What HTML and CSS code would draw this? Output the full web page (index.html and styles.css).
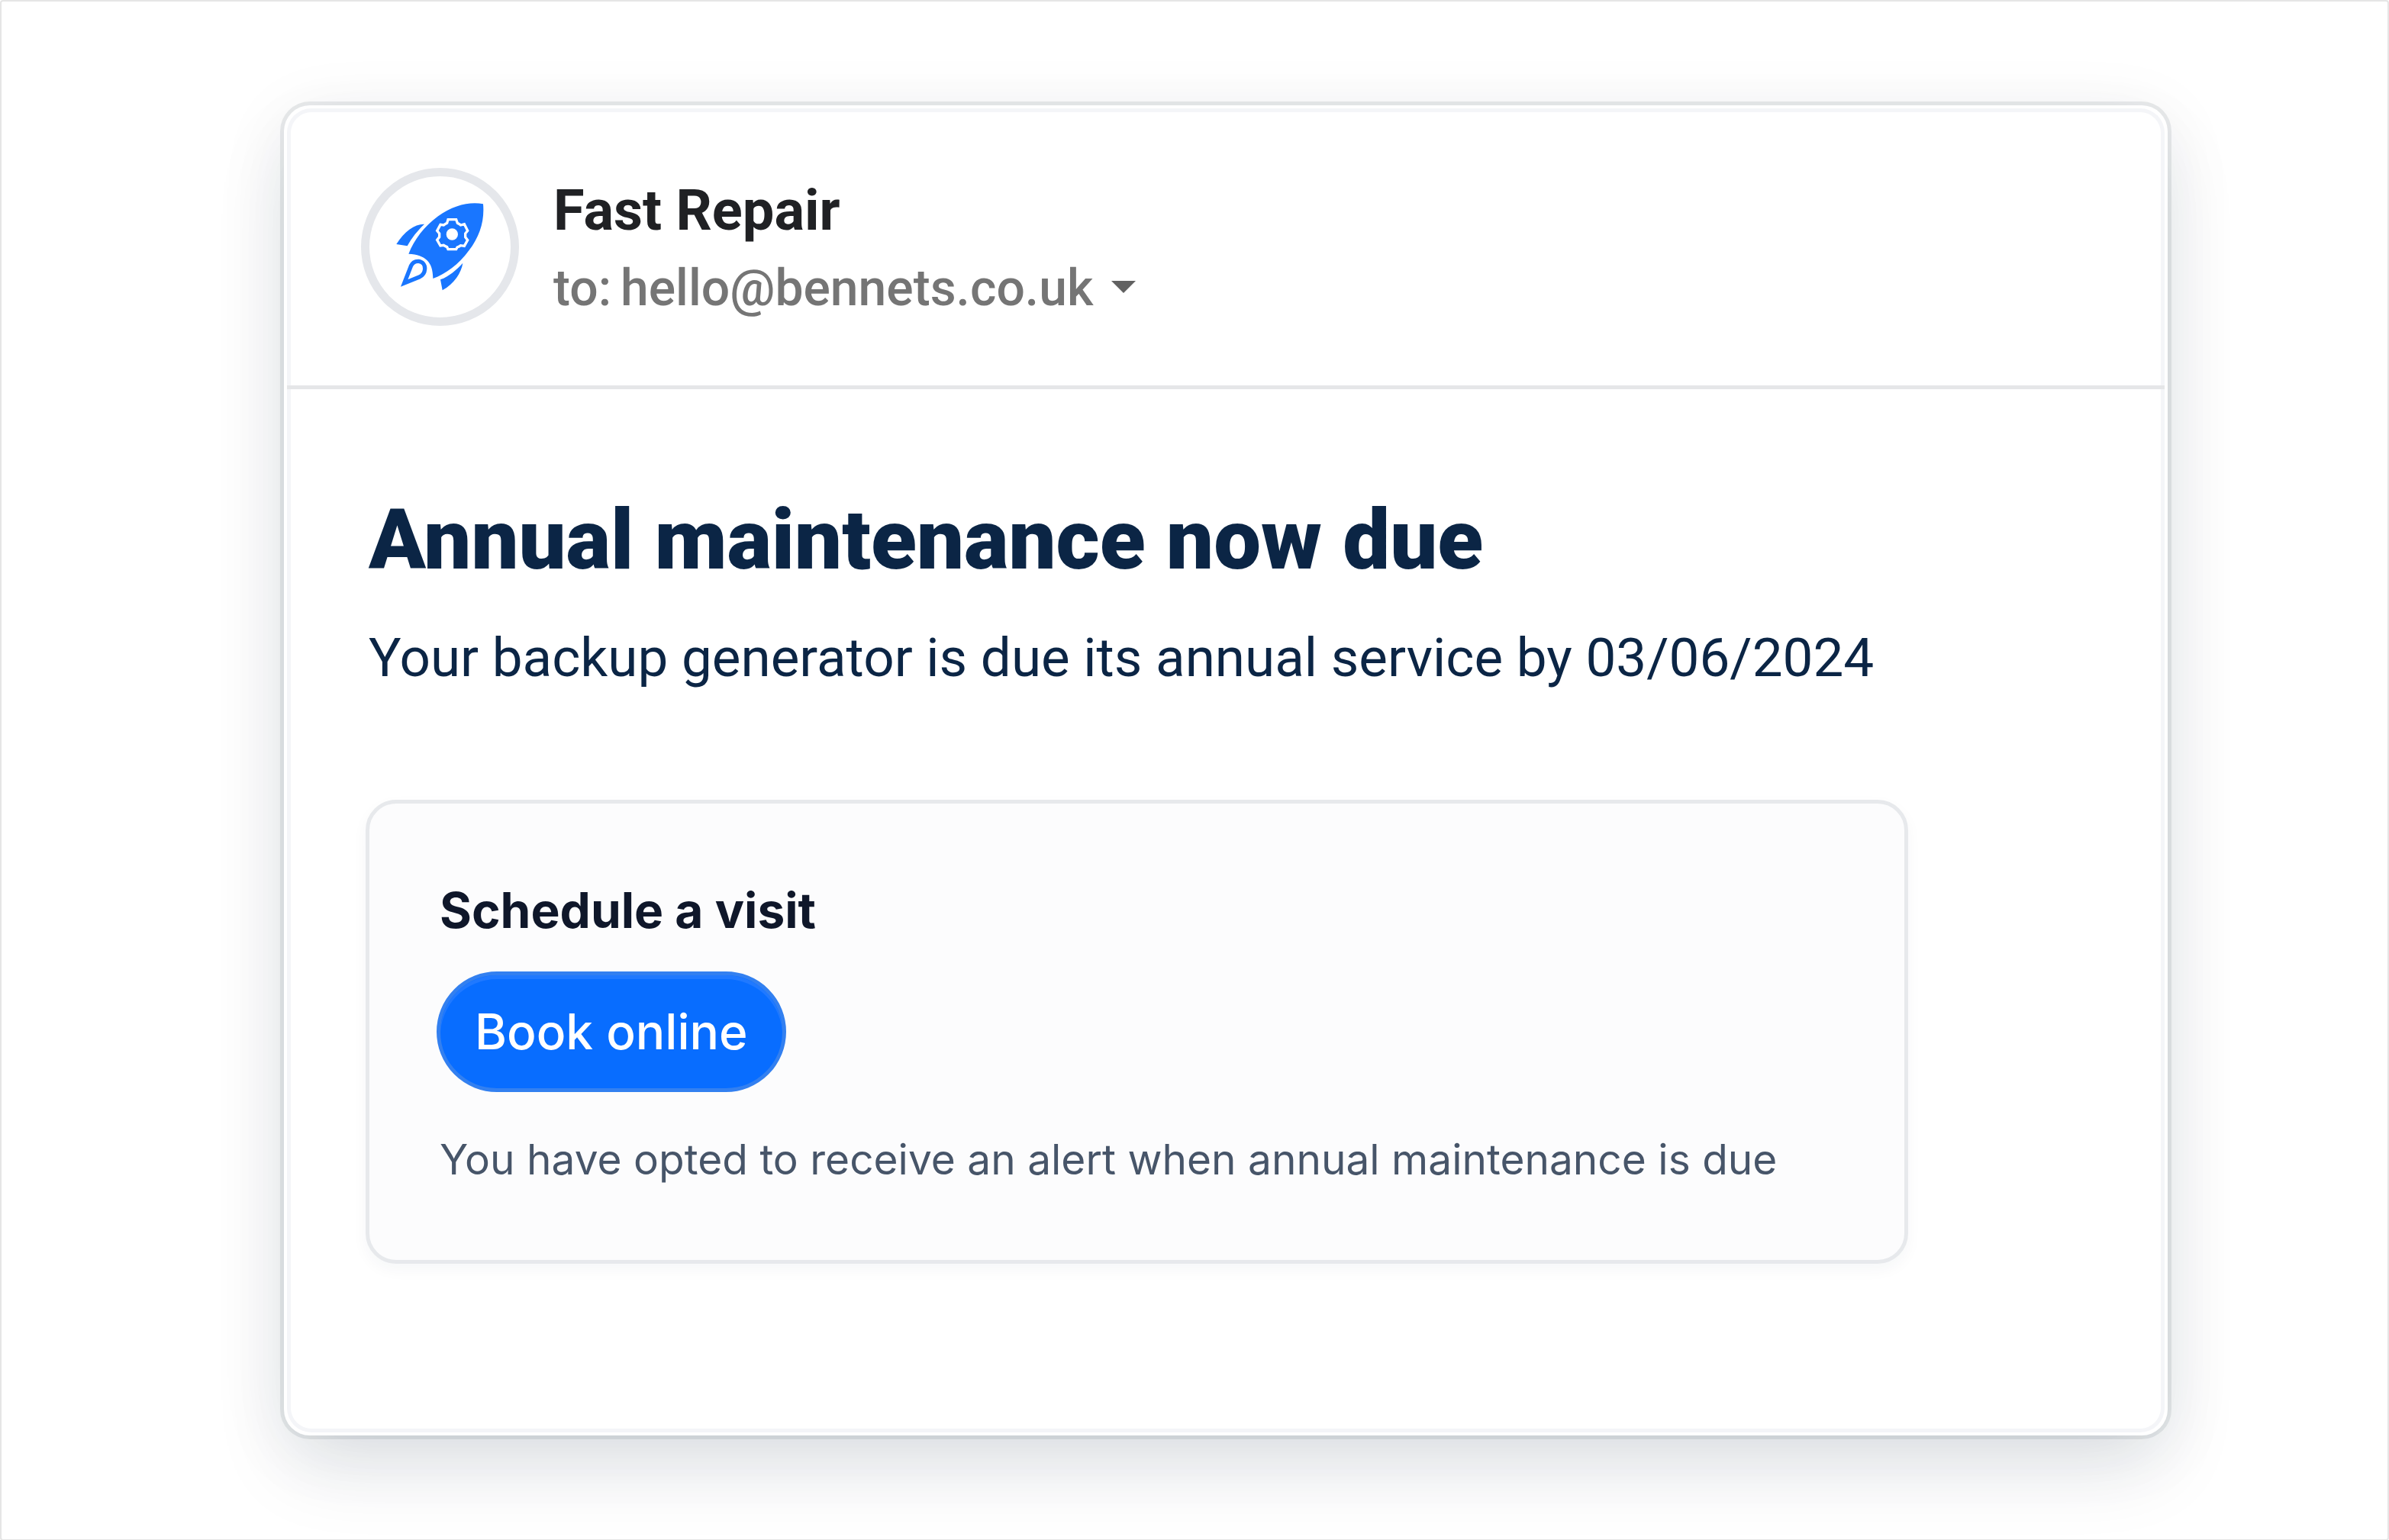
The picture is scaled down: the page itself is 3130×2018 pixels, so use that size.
FILE: index.html
```html
<!DOCTYPE html>
<html lang="en">
<head>
<meta charset="utf-8">
<meta name="viewport" content="width=device-width, initial-scale=1">
<title>Annual maintenance now due</title>
<link rel="stylesheet" href="styles.css">
</head>
<body>
<main class="stage">
  <article class="mail">
    <div class="mail-inner">
      <header class="mail-header">
        <div class="avatar">
          <svg class="rocket" viewBox="0 0 345 345" role="img" aria-label="Fast Repair logo">
            <g fill="#1976ff">
              <path d="M342 4C290-6 225 8 165 52C110 92 72 143 49 200C83 201 106 210 122 226C137 241 144 262 145 297C195 279 245 243 286 187C329 131 348 70 342 4Z"/>
              <path d="M111 83C73 82 32 112 1 162L44 169C62 136 83 110 111 83Z"/>
              <path d="M262 236C256 275 228 317 182 343L174 301C209 288 236 264 262 236Z"/>
            </g>
            <path d="M32 315L58 248C64 234 75 228 89 229C104 231 114 243 113 259C112 275 105 285 91 291Z" fill="none" stroke="#1976ff" stroke-width="16"/>
            <path d="M204 65H236L241 79C246 81 250 83 254 87L268 83L281 109L272 120V134L281 146L268 169L254 167C250 170 246 172 240 174L236 182H204L200 173C195 171 191 169 187 166L174 168L161 145L170 134V120L161 109L174 85L187 87C192 83 196 81 200 79Z" fill="none" stroke="#fff" stroke-width="10"/>
            <circle cx="220" cy="123" r="23" fill="#fff"/>
          </svg>
        </div>
        <div class="sender">
          <h2 class="sender-name">Fast Repair</h2>
          <div class="recipient">
            <span class="to">to:</span>
            <a class="address" href="mailto:hello@bennets.co.uk">hello@bennets.co.uk</a>
            <button class="details" type="button" aria-label="Show details">
              <svg class="caret" viewBox="0 0 32 16" aria-hidden="true"><path d="M0 0H32L16 16Z" fill="#616161"/></svg>
            </button>
          </div>
        </div>
      </header>
      <div class="mail-body">
        <div class="intro">
          <h1 class="title">Annual maintenance now due</h1>
          <p class="lead">Your backup generator is due its annual service by 03/06/2024</p>
        </div>
        <section class="visit">
          <h3 class="visit-title">Schedule a visit</h3>
          <button class="book" type="button">Book online</button>
          <p class="note">You have opted to receive an alert when annual maintenance is due</p>
        </section>
      </div>
    </div>
  </article>
</main>
</body>
</html>
```
FILE: styles.css
```css
* {
  box-sizing: border-box;
}

body {
  margin: 0;
  background: #fff;
  font-family: Roboto, "Liberation Sans", sans-serif;
}

h1, h2, h3, p {
  margin: 0;
}

.stage {
  min-height: 100vh;
  padding: 136px 288px 136px 370px;
  border: 2px solid #e5e5e5;
  border-radius: 4px;
  overflow: hidden;
}

.mail {
  padding: 4px;
  border-radius: 34px;
  background: #fff;
  box-shadow:
    0 0 0 5px rgba(20, 40, 60, 0.09),
    0 48px 104px -8px rgba(20, 40, 60, 0.11),
    0 16px 96px rgba(20, 40, 60, 0.07);
}

.mail-inner {
  border-radius: 32px;
  box-shadow: inset 0 0 0 5px #f4f5f8;
}

.mail-header {
  display: flex;
  gap: 45px;
  padding: 78px 97px;
  border-bottom: 5px solid #e5e6e8;
}

.avatar {
  display: flex;
  flex: none;
  align-items: center;
  justify-content: center;
  width: 207px;
  height: 207px;
  border: 11px solid #e5e7eb;
  border-radius: 50%;
}

.rocket {
  width: 115px;
  height: 115px;
}

.sender {
  padding-top: 10px;
}

.sender-name {
  color: #202124;
  font-size: 74px;
  font-weight: 700;
  line-height: 92px;
}

.recipient {
  display: flex;
  align-items: center;
  gap: 12px;
  margin-top: 8px;
  color: #757575;
  font-size: 66px;
  font-weight: 500;
  line-height: 96px;
}

.address {
  color: inherit;
  text-decoration: none;
}

.details {
  display: flex;
  padding: 0 12px 4px;
  border: 0;
  background: none;
}

.caret {
  width: 32px;
  height: 16px;
}

.mail-body {
  padding: 128px 336px 221px 103px;
}

.intro {
  padding-left: 4px;
  color: #0b2545;
}

.title {
  font-size: 110px;
  font-weight: 900;
  line-height: 140px;
}

.lead {
  margin-top: 34px;
  font-size: 71px;
  font-weight: 400;
  line-height: 100px;
}

.visit {
  margin-top: 136px;
  padding: 92px 92px 90px;
  border: 5px solid #e7e9ec;
  border-radius: 40px;
  background: #fcfcfd;
  box-shadow: 0 8px 20px rgba(20, 40, 65, 0.04);
  font-family: Inter, "Liberation Sans", sans-serif;
}

.visit-title {
  color: #0f172a;
  font-size: 64px;
  font-weight: 700;
  line-height: 96px;
}

.book {
  display: block;
  height: 158px;
  margin: 32px 0 0 -4px;
  padding: 0 45px;
  border: 5px solid #3380f0;
  border-radius: 80px;
  background: #086dff;
  box-shadow: inset 0 5px #2079ff;
  color: #fff;
  font: 500 64px/96px Inter, "Liberation Sans", sans-serif;
}

.note {
  margin-top: 46px;
  color: #475569;
  font-size: 55px;
  font-weight: 400;
  line-height: 84px;
}
```
